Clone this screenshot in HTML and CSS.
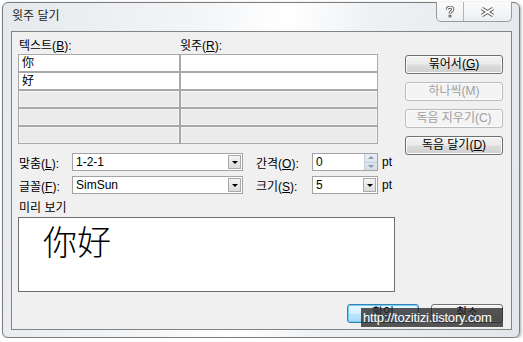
FILE: index.html
```html
<!DOCTYPE html>
<html lang="ko">
<head>
    <meta charset="UTF-8">
    <title>윗주 달기</title>
    <link rel="stylesheet" href="styles.css">
</head>
<body>
    <div class="window">
        <div class="titlebar">
            <span class="title">윗주 달기</span>
            <div class="caption-btns">
                <div class="cap help">
                    <svg width="10" height="12" viewBox="0 0 10 12">
                        <path d="M2.2 3.6 C2.2 1.9 3.5 1.2 5 1.2 C6.6 1.2 7.8 2.1 7.8 3.5 C7.8 5.3 5 5.4 5 7.4" fill="none" stroke="#5a5a5a" stroke-width="3"/>
                        <circle cx="5" cy="10" r="1.6" fill="#5a5a5a"/>
                        <path d="M2.2 3.6 C2.2 1.9 3.5 1.2 5 1.2 C6.6 1.2 7.8 2.1 7.8 3.5 C7.8 5.3 5 5.4 5 7.4" fill="none" stroke="#fff" stroke-width="1.2"/>
                        <circle cx="5" cy="10" r="0.6" fill="#fff"/>
                    </svg>
                </div>
                <div class="cap close">
                    <svg width="15" height="10" viewBox="0 0 15 10">
                        <path d="M2 1.5 L13 8.5 M2 8.5 L13 1.5" stroke="#5a5a5a" stroke-width="3.6"/>
                        <path d="M2 1.5 L13 8.5 M2 8.5 L13 1.5" stroke="#fff" stroke-width="1.6"/>
                    </svg>
                </div>
            </div>
        </div>

        <div class="client">
            <div class="main">
                <div class="left">
                    <div class="grid-head">
                        <span class="head-col1">텍스트(<u>B</u>):</span>
                        <span>윗주(<u>R</u>):</span>
                    </div>
                    <table class="ruby-table">
                        <tr class="filled"><td class="c1">你</td><td></td></tr>
                        <tr class="filled"><td class="c1">好</td><td></td></tr>
                        <tr class="empty"><td class="c1"></td><td></td></tr>
                        <tr class="empty"><td class="c1"></td><td></td></tr>
                        <tr class="empty"><td class="c1"></td><td></td></tr>
                    </table>

                    <div class="options">
                        <div class="opt-row">
                            <span class="opt-label">맞춤(<u>L</u>):</span>
                            <div class="combo wide">
                                <span class="combo-text">1-2-1</span>
                                <span class="drop"><i></i></span>
                            </div>
                            <span class="opt-label second">간격(<u>O</u>):</span>
                            <div class="combo narrow">
                                <span class="combo-text">0</span>
                                <span class="spin"><i class="up"></i><i class="down"></i></span>
                            </div>
                            <span class="unit">pt</span>
                        </div>
                        <div class="opt-row">
                            <span class="opt-label">글꼴(<u>F</u>):</span>
                            <div class="combo wide">
                                <span class="combo-text">SimSun</span>
                                <span class="drop"><i></i></span>
                            </div>
                            <span class="opt-label second">크기(<u>S</u>):</span>
                            <div class="combo narrow">
                                <span class="combo-text">5</span>
                                <span class="drop"><i></i></span>
                            </div>
                            <span class="unit">pt</span>
                        </div>
                    </div>

                    <div class="preview-label">미리 보기</div>
                    <div class="preview"><span>你好</span></div>
                </div>

                <div class="side">
                    <button class="btn">묶어서(<u>G</u>)</button>
                    <button class="btn" disabled>하나씩(M)</button>
                    <button class="btn" disabled>독음 지우기(C)</button>
                    <button class="btn">독음 달기(<u>D</u>)</button>
                </div>
            </div>

            <div class="footer">
                <button class="btn default">확인</button>
                <button class="btn">취소</button>
            </div>
        </div>

        <div class="watermark">http://tozitizi.tistory.com</div>
    </div>
</body>
</html>
```

FILE: styles.css
```css
* {
    box-sizing: border-box;
    margin: 0;
    padding: 0;
}

body {
    font-family: 'Liberation Sans', 'Noto Sans CJK KR', sans-serif;
    font-size: 12px;
    background-color: #fff;
    color: #000;
}

.window {
    position: relative;
    margin: 2px 0 0 2px;
    width: 518px;
    height: 336px;
    border: 1px solid #7c7c7c;
    border-radius: 6px;
    padding: 0 7px 7px 8px;
    background: linear-gradient(100deg, #e6e9ec 0%, #f3f5f7 35%, #ffffff 50%, #eef1f4 65%, #e3e6ea 100%);
    box-shadow: 1px 1px 3px rgba(0, 0, 0, 0.35);
}

.titlebar {
    height: 28px;
    display: flex;
    justify-content: space-between;
    align-items: flex-start;
}

.title {
    padding: 6px 0 0 1px;
    line-height: 15px;
    color: #222;
}

.caption-btns {
    display: flex;
    margin-top: -1px;
    width: 76px;
    height: 20px;
    border: 1px solid #9a9a9a;
    border-top: none;
    border-radius: 0 0 5px 5px;
    background: linear-gradient(#fbfbfb, #eceef0);
    overflow: hidden;
}

.cap {
    display: flex;
    align-items: center;
    justify-content: center;
}

.cap.help {
    width: 27px;
    border-right: 1px solid #b4b4b4;
    padding-top: 1px;
}

.cap.close {
    flex: 1;
    padding-top: 1px;
}

.client {
    height: 299px;
    border: 1px solid #838383;
    background-color: #f0f0f0;
    display: flex;
    flex-direction: column;
}

.main {
    display: flex;
    padding: 0 8px 0 6px;
    gap: 10px;
}

.left {
    width: 377px;
}

.grid-head {
    display: flex;
    padding-top: 6px;
    line-height: 16px;
    height: 22px;
}

.head-col1 {
    width: 162px;
    padding-left: 1px;
}

.ruby-table {
    width: 360px;
    border-collapse: separate;
    border-spacing: 0;
}

.ruby-table td {
    height: 18px;
    border: 1px solid #a8a8a8;
    padding: 0 0 0 3px;
    line-height: 15px;
    vertical-align: middle;
}

.ruby-table .c1 {
    width: 162px;
}

.ruby-table .filled td {
    background-color: #fff;
}

.ruby-table .empty td {
    background-color: #ebebeb;
    box-shadow: inset 0 0 0 1px #f3f3f3;
}

.options {
    margin-top: 9px;
    display: flex;
    flex-direction: column;
    gap: 5px;
}

.opt-row {
    display: flex;
    align-items: center;
    height: 18px;
}

.opt-label {
    width: 54px;
    padding-left: 1px;
}

.opt-label.second {
    width: 57px;
    margin-left: 12px;
}

.combo {
    height: 18px;
    border: 1px solid #a3a3a3;
    background-color: #fff;
    display: flex;
    align-items: center;
}

.combo.wide {
    width: 171px;
}

.combo.narrow {
    width: 66px;
}

.combo-text {
    flex: 1;
    padding-left: 3px;
    line-height: 16px;
}

.drop {
    width: 13px;
    height: 14px;
    margin-right: 1px;
    border: 1px solid #a9a9a9;
    background: linear-gradient(#f4f4f4, #dcdcdc);
    display: flex;
    align-items: center;
    justify-content: center;
}

.drop i {
    width: 0;
    height: 0;
    border-left: 3px solid transparent;
    border-right: 3px solid transparent;
    border-top: 3px solid #000;
    margin-top: 1px;
}

.spin {
    width: 13px;
    height: 16px;
    display: flex;
    flex-direction: column;
    background: linear-gradient(#e9eef4, #d5dde8);
    border-left: 1px solid #c6ceda;
}

.spin i {
    flex: 1;
    display: flex;
    align-items: center;
    justify-content: center;
}

.spin i::after {
    content: '';
    border-left: 3px solid transparent;
    border-right: 3px solid transparent;
}

.spin .up::after {
    border-bottom: 3px solid #8a97a8;
}

.spin .down {
    border-top: 1px solid #c6ceda;
}

.spin .down::after {
    border-top: 3px solid #8a97a8;
}

.unit {
    margin-left: 4px;
}

.preview-label {
    margin-top: 6px;
    padding-left: 1px;
    line-height: 16px;
}

.preview {
    margin-top: 1px;
    width: 377px;
    height: 75px;
    border: 1px solid #6f6f6f;
    background-color: #fff;
    padding: 5px 0 0 24px;
    font-family: 'Noto Sans CJK SC', sans-serif;
    font-size: 34px;
    line-height: 36px;
    font-weight: 300;
}

.side {
    width: 98px;
    padding-top: 23px;
    display: flex;
    flex-direction: column;
    gap: 8px;
}

.btn {
    font-family: 'Liberation Sans', 'Noto Sans CJK KR', sans-serif;
    font-size: 12px;
    height: 19px;
    line-height: 15px;
    color: #000;
    border: 1px solid #707070;
    border-radius: 3px;
    background: linear-gradient(#f2f2f2 0%, #ebebeb 48%, #dddddd 52%, #cfcfcf 100%);
    box-shadow: inset 0 0 0 1px #fcfcfc;
}

.btn:disabled {
    color: #a0a0a0;
    border-color: #b8bcbf;
    background: #f4f4f4;
}

.footer {
    margin-top: 12px;
    padding-right: 8px;
    display: flex;
    justify-content: flex-end;
    gap: 12px;
}

.footer .btn {
    width: 72px;
}

.btn.default {
    border-color: #3c7fb1;
    box-shadow: inset 0 0 0 1px #6fd0f5;
    background: linear-gradient(#eaf6fd 0%, #d9f0fc 48%, #bee6fd 52%, #a7d9f5 100%);
}

.watermark {
    position: absolute;
    left: 358px;
    top: 305px;
    width: 142px;
    height: 19px;
    background-color: rgba(40, 40, 40, 0.78);
    color: #fff;
    font-size: 13px;
    line-height: 19px;
    padding-left: 2px;
    letter-spacing: -0.2px;
    white-space: nowrap;
}
```
